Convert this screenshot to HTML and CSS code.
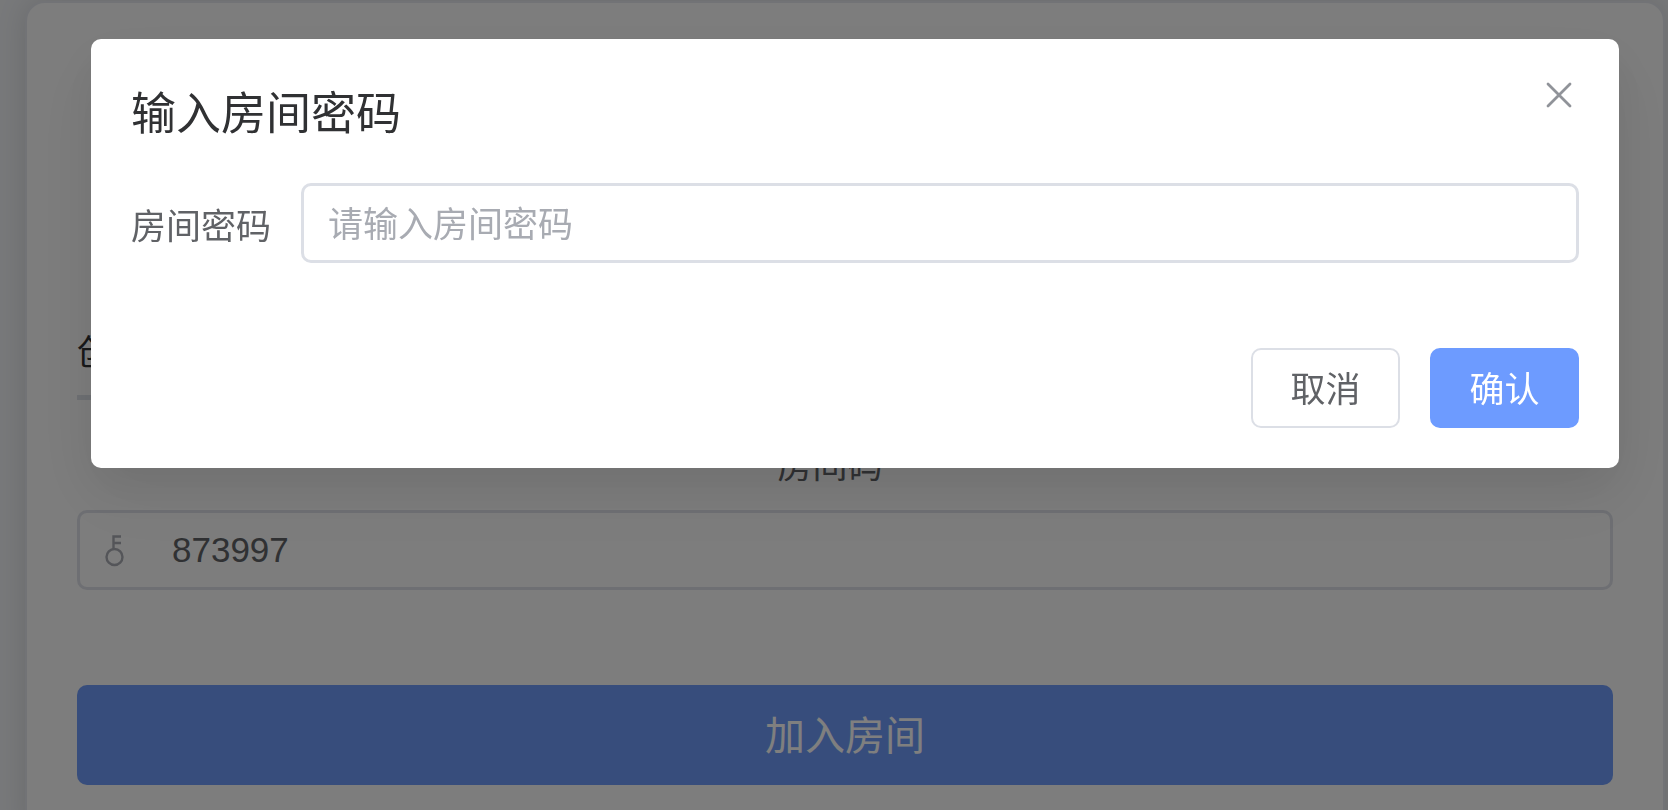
FILE: index.html
```html
<!DOCTYPE html>
<html lang="zh-CN">
<head>
    <meta charset="UTF-8">
    <title>加入房间</title>
    <link rel="stylesheet" href="styles.css">
</head>
<body>
    <main class="room-card">
        <nav class="tabs">
            <a href="#create" class="tab">创建房间</a>
        </nav>
        <form class="room-form">
            <label for="roomCode" class="room-label">房间码</label>
            <div class="input-box">
                <svg class="key-icon" viewBox="0 0 36 36" fill="none" stroke="currentColor" stroke-width="2.4">
                    <circle cx="17.5" cy="25" r="8"/>
                    <path d="M16.5 17V4.500h7.500M16.500 11h7.500"/>
                </svg>
                <input type="text" id="roomCode" value="873997">
            </div>
            <button type="button" class="join-button">加入房间</button>
        </form>
    </main>

    <div class="overlay">
        <div class="dialog" role="dialog" aria-labelledby="dialogTitle">
            <header class="dialog-header">
                <h2 id="dialogTitle">输入房间密码</h2>
                <button type="button" class="close-button" aria-label="关闭">
                    <svg viewBox="0 0 40 32" fill="none" stroke="currentColor" stroke-width="2.8" stroke-linecap="round">
                        <path d="M9 5l22 22M31 5L9 27"/>
                    </svg>
                </button>
            </header>
            <form>
                <div class="form-item">
                    <label for="roomPassword">房间密码</label>
                    <input type="text" id="roomPassword" class="password-input" placeholder="请输入房间密码">
                </div>
                <footer class="dialog-footer">
                    <button type="button" class="button">取消</button>
                    <button type="button" class="button primary">确认</button>
                </footer>
            </form>
        </div>
    </div>
</body>
</html>
```

FILE: styles.css
```css
* {
    box-sizing: border-box;
}

body {
    margin: 0;
    padding: 1px 3px 0 25px;
    height: 100vh;
    overflow: hidden;
    background-color: #f0f2f5;
    font-family: "Liberation Sans", "Noto Sans CJK SC", sans-serif;
    font-size: 35px;
    color: #606266;
}

input,
button {
    font-family: inherit;
    font-size: inherit;
}

button {
    padding: 0 0 4px;
    border: none;
    border-radius: 10px;
    cursor: pointer;
}

.room-card {
    min-height: 100vh;
    padding: 297px 50px 50px;
    border: 2px solid #e4e7ed;
    border-radius: 20px;
    background-color: #fafafa;
    box-shadow: 0 0 30px rgba(0, 0, 0, 0.12);
}

/* Tabs */
.tabs {
    display: flex;
    height: 100px;
    margin-bottom: 38px;
    border-bottom: 5px solid #dcdfe6;
}

.tab {
    line-height: 106px;
    color: #303133;
    text-decoration: none;
}

/* Join form */
.room-form {
    display: flex;
    flex-direction: column;
}

.room-label {
    margin-bottom: 16px;
    padding-right: 30px;
    line-height: 56px;
    text-align: center;
}

.input-box {
    display: flex;
    align-items: center;
    height: 80px;
    margin-bottom: 95px;
    padding: 0 17px;
    border: 3px solid #dcdfe6;
    border-radius: 10px;
}

.key-icon {
    width: 36px;
    height: 36px;
    color: #a8abb2;
}

.input-box input {
    flex: 1;
    min-width: 0;
    margin-left: 39px;
    padding: 0;
    border: none;
    outline: none;
    background: none;
    color: #606266;
}

.join-button {
    height: 100px;
    background-color: #6e9bf8;
    color: #fff;
    font-size: 40px;
}

/* Password dialog */
.overlay {
    position: fixed;
    inset: 0;
    padding: 39px 49px 0 91px;
    background-color: rgba(0, 0, 0, 0.5);
}

.dialog {
    padding: 40px;
    border-radius: 10px;
    background-color: #fff;
    box-shadow: 0 30px 80px 10px rgba(0, 0, 0, 0.04), 0 20px 50px rgba(0, 0, 0, 0.08);
}

.dialog-header {
    display: flex;
    justify-content: space-between;
    align-items: flex-start;
    margin-bottom: 32px;
}

.dialog-header h2 {
    margin: 0;
    font-size: 45px;
    font-weight: normal;
    line-height: 72px;
    color: #303133;
}

.close-button {
    width: 40px;
    height: 32px;
    padding: 0;
    background: none;
    color: #909399;
}

.close-button svg {
    display: block;
    width: 40px;
    height: 32px;
}

.form-item {
    display: flex;
    align-items: center;
    gap: 30px;
    margin-bottom: 85px;
}

.password-input {
    flex: 1;
    min-width: 0;
    height: 80px;
    padding: 4px 24px 0;
    border: 3px solid #dcdfe6;
    border-radius: 10px;
    outline: none;
    color: #606266;
}

.password-input::placeholder {
    color: #a8abb2;
}

.dialog-footer {
    display: flex;
    justify-content: flex-end;
    gap: 30px;
}

.button {
    width: 149px;
    height: 80px;
    border: 2px solid #dcdfe6;
    background-color: #fff;
    color: #606266;
}

.primary {
    border-color: #6d9bff;
    background-color: #6d9bff;
    color: #fff;
}
```
